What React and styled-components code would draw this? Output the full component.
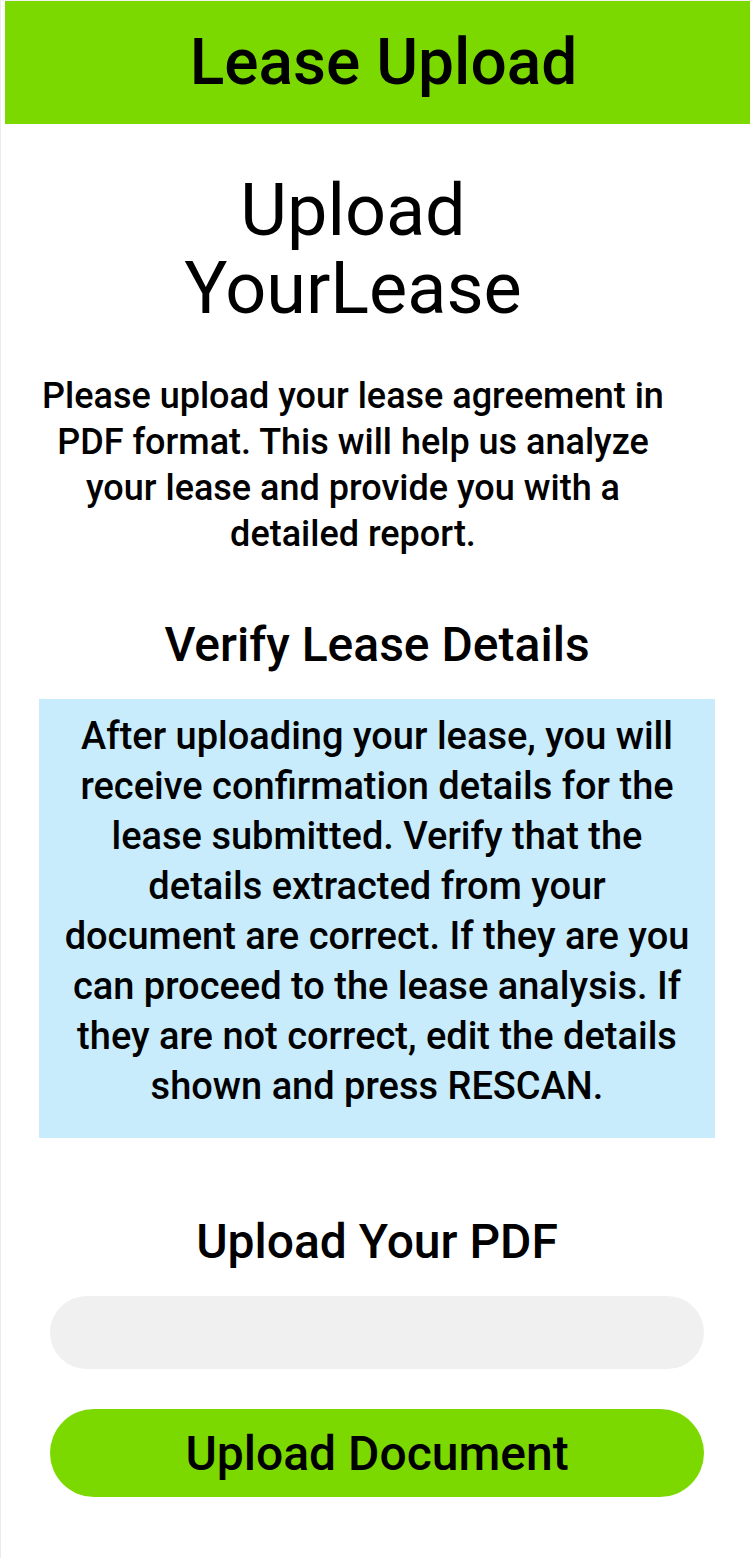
import React from "react";
import styled, { createGlobalStyle } from "styled-components";

const Global = createGlobalStyle`
  html, body { margin: 0; padding: 0; background: #ffffff; }
  body { font-family: Roboto, "Noto Sans", "Liberation Sans", sans-serif; color: #000; }
  * { box-sizing: border-box; }
`;

const Page = styled.div`
  min-height: 1558px;
  border-top: 1px solid #f2f2f2;
  border-left: 1px solid #ececec;
  padding-left: 4px;
  display: flex;
  flex-direction: column;
`;

const Header = styled.header`
  height: 123px;
  background: #7bd900;
  display: flex;
  align-items: center;
  justify-content: center;
`;

const HeaderTitle = styled.h1`
  margin: 0;
  font-size: 64px;
  font-weight: 500;
  line-height: 1;
  padding-left: 12px;
`;

const Intro = styled.section`
  width: 650px;
  margin: 0 auto 0 23px;
  display: flex;
  flex-direction: column;
  align-items: center;
  text-align: center;
`;

const BigTitle = styled.h2`
  margin: 48px 0 0;
  width: 360px;
  font-size: 72px;
  font-weight: 400;
  line-height: 78px;
`;

const Lead = styled.p`
  margin: 45px 0 0;
  font-size: 36px;
  font-weight: 500;
  line-height: 46px;
`;

const Main = styled.section`
  display: flex;
  flex-direction: column;
  align-items: center;
  padding: 0 32px 0 31px;
`;

const SectionTitle = styled.h3`
  margin: ${(p) => p.$top}px 0 0;
  font-size: 48px;
  font-weight: 500;
  line-height: 56px;
  text-align: center;
`;

const InfoBox = styled.div`
  margin-top: 26px;
  width: 676px;
  background: #c8ecfc;
  padding: 12px 23px 27px;
  font-size: 38px;
  font-weight: 500;
  line-height: 50px;
  text-align: center;
`;

const FileField = styled.div`
  margin-top: 26px;
  width: 654px;
  height: 73px;
  border-radius: 37px;
  background: #f0f0f0;
`;

const UploadButton = styled.button`
  margin-top: 40px;
  width: 654px;
  height: 88px;
  border: none;
  border-radius: 44px;
  background: #7bd900;
  color: #000;
  font-family: inherit;
  font-size: 48px;
  font-weight: 500;
  cursor: pointer;
`;

export default function App() {
  return (
    <>
      <Global />
      <Page>
        <Header>
          <HeaderTitle>Lease Upload</HeaderTitle>
        </Header>
        <Intro>
          <BigTitle>Upload YourLease</BigTitle>
          <Lead>
            Please upload your lease agreement in PDF format. This will help us
            analyze your lease and provide you with a detailed report.
          </Lead>
        </Intro>
        <Main>
          <SectionTitle $top={60}>Verify Lease Details</SectionTitle>
          <InfoBox>
            After uploading your lease, you will receive confirmation details for
            the lease submitted. Verify that the details extracted from your
            document are correct. If they are you can proceed to the lease
            analysis. If they are not correct, edit the details shown and press
            RESCAN.
          </InfoBox>
          <SectionTitle $top={76}>Upload Your PDF</SectionTitle>
          <FileField />
          <UploadButton>Upload Document</UploadButton>
        </Main>
      </Page>
    </>
  );
}
